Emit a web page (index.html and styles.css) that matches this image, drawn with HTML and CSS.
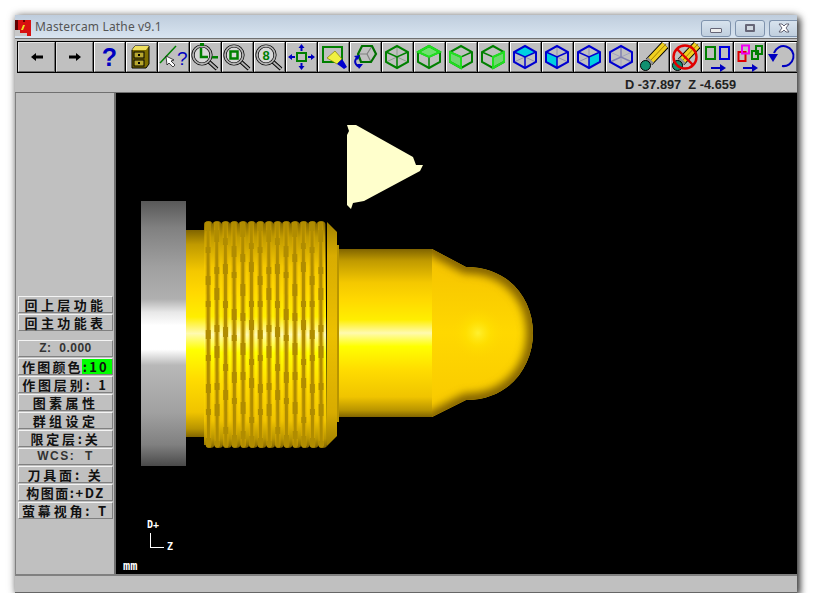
FILE: index.html
```html
<!DOCTYPE html>
<html lang="en">
<head>
    <meta charset="UTF-8">
    <title>Mastercam Lathe v9.1</title>
    <link rel="stylesheet" href="styles.css">
</head>
<body>

    <!-- shared icon parts -->
    <svg class="defs" width="0" height="0">
        <defs>
            <symbol id="lens" viewBox="0 0 29 30">
                <line x1="16" y1="18" x2="26" y2="27" stroke="#000" stroke-width="4"/>
                <line x1="16" y1="18" x2="26" y2="27" stroke="#b0b0b0" stroke-width="2"/>
                <circle cx="11" cy="13" r="9" fill="#d8d8d8" stroke="#000" stroke-width="3.2"/>
                <circle cx="11" cy="13" r="9" fill="none" stroke="#b0b0b0" stroke-width="1.8"/>
            </symbol>
            <symbol id="cube" viewBox="0 0 29 30">
                <polygon points="14,4 25,10 25,20 14,26 3,20 3,10" fill="none" stroke="currentColor" stroke-width="2"/>
                <polyline points="3,10 14,15 25,10" fill="none" stroke="currentColor" stroke-width="1.5"/>
                <line x1="14" y1="15" x2="14" y2="26" stroke="currentColor" stroke-width="1.5"/>
            </symbol>
            <symbol id="pencil" viewBox="0 0 29 30">
                <line x1="10" y1="20" x2="26" y2="3" stroke="#000" stroke-width="9"/>
                <line x1="10" y1="20" x2="26" y2="3" stroke="#f0d020" stroke-width="7"/>
                <line x1="11" y1="19" x2="27" y2="2" stroke="#a08000" stroke-width="1"/>
                <line x1="7" y1="23" x2="12" y2="18" stroke="#909090" stroke-width="8"/>
                <circle cx="6.500" cy="23.500" r="5" fill="#109070" stroke="#000"/>
            </symbol>
            <symbol id="next" viewBox="0 0 29 30">
                <path d="M8 25h9v-3l6 4-6 4v-3H8z" fill="#0000c0"/>
            </symbol>
        </defs>
    </svg>

    <div class="window">
        <div class="titlebar">
            <svg class="app-icon" viewBox="0 0 16 16">
                <rect width="16" height="16" fill="#d81010"/>
                <path d="M0 10h5v3h7v3H0z" fill="#c8c8c8"/>
                <path d="M0 0h3v10H0zM8 0h2v2H8z" fill="#600000"/>
                <path d="M6 10l2-5 2 0-2 5z" fill="#f0e020"/>
            </svg>
            <span class="title">Mastercam Lathe v9.1</span>
            <div class="win-controls">
                <div class="win-btn"><span class="win-min"></span></div>
                <div class="win-btn"><span class="win-max"></span></div>
                <div class="win-btn win-close">
                    <svg viewBox="0 0 12 10"><path d="M1 1h3l2 2 2-2h3L8 5l3 4H8L6 7 4 9H1l3-4z" fill="#fff" stroke="#556" stroke-width=".9"/></svg>
                </div>
            </div>
        </div>

        <div class="toolbar">
            <div class="tb-row">
                <div class="tb-btn wide">
                    <svg class="arrow" viewBox="0 0 12 10"><path d="M0 5l5-4v2.500h7v3H5V9z" fill="#000"/></svg>
                </div>
                <div class="tb-btn wide">
                    <svg class="arrow" viewBox="0 0 12 10"><path d="M12 5L7 1v2.500H0v3h7V9z" fill="#000"/></svg>
                </div>
                <div class="tb-btn"><span class="help">?</span></div>
                <div class="tb-btn">
                    <svg viewBox="0 0 29 30">
                        <path d="M5 8l3-4h14v18l-3 4H5z" fill="#807000" stroke="#000"/>
                        <path d="M5 8l3-4h14l-3 4z" fill="#f0e060"/>
                        <rect x="7" y="10" width="10" height="6" fill="#b8a830" stroke="#000"/>
                        <rect x="7" y="18" width="10" height="6" fill="#b8a830" stroke="#000"/>
                        <rect x="11" y="12" width="2" height="2" fill="#000"/>
                        <rect x="11" y="20" width="2" height="2" fill="#000"/>
                    </svg>
                </div>
                <div class="tb-btn">
                    <svg viewBox="0 0 29 30">
                        <line x1="1" y1="21" x2="17" y2="4" stroke="#008000" stroke-width="1.500"/>
                        <path d="M7 14l1 9 2-2 4 4 2-2-4-4 3-1z" fill="#fff" stroke="#000" stroke-width=".7"/>
                        <text class="icon-q" x="18" y="23">?</text>
                    </svg>
                </div>
                <div class="tb-btn">
                    <svg viewBox="0 0 29 30">
                        <use href="#lens"/>
                        <path d="M10 6v9h7" fill="none" stroke="#008000" stroke-width="2.500"/>
                        <rect x="9" y="1" width="4" height="3" fill="#008000"/>
                        <rect x="21" y="14" width="6" height="2.500" fill="#008000"/>
                    </svg>
                </div>
                <div class="tb-btn">
                    <svg viewBox="0 0 29 30">
                        <use href="#lens"/>
                        <rect x="7.500" y="9.500" width="7" height="7" fill="none" stroke="#008000" stroke-width="2.500"/>
                    </svg>
                </div>
                <div class="tb-btn">
                    <svg viewBox="0 0 29 30">
                        <use href="#lens"/>
                        <text class="icon-8" x="11" y="18">8</text>
                    </svg>
                </div>
                <div class="tb-btn">
                    <svg viewBox="0 0 29 30">
                        <rect x="10" y="11" width="9" height="8" fill="#c0c0c0" stroke="#008000" stroke-width="2"/>
                        <path d="M14.500 2l3 4h-2v3h-2V6h-2zM14.500 28l3-4h-2v-3h-2v3h-2zM1 15l4-3v2h3v2H5v2zM28 15l-4-3v2h-3v2h3v2z" fill="#0000c0"/>
                    </svg>
                </div>
                <div class="tb-btn">
                    <svg viewBox="0 0 29 30">
                        <rect x="4" y="5" width="19" height="15" fill="none" stroke="#008000" stroke-width="2"/>
                        <path d="M8 16l8-7 7 8-5 5z" fill="#f0f040" stroke="#808000" stroke-width=".7"/>
                        <path d="M18 22l5-5 2 3 3 5-3 2-4-3z" fill="#0000d0"/>
                    </svg>
                </div>
                <div class="tb-btn">
                    <svg viewBox="0 0 29 30">
                        <path d="M7 12l9 0 5-8M16 12l4 8" fill="none" stroke="#808080" stroke-width="1.200"/>
                        <polygon points="11,4 21,4 25,12 20,20 10,20 7,12" fill="none" stroke="#007000" stroke-width="2.200"/>
                        <path d="M7 15c-4 3-4 7 1 10" fill="none" stroke="#0000c0" stroke-width="2"/>
                        <path d="M3 14l6-1-2 5zM12 22l-4 5-2-5z" fill="#0000c0"/>
                    </svg>
                </div>
                <div class="tb-btn">
                    <svg viewBox="0 0 29 30" class="green">
                        <path d="M3 20l11-5 11 5M14 4v11" fill="none" stroke="#8aa08a"/>
                        <use href="#cube"/>
                    </svg>
                </div>
                <div class="tb-btn">
                    <svg viewBox="0 0 29 30" class="green">
                        <path d="M3 10l11 5 11-5-11-6z" fill="#70e070"/>
                        <use href="#cube"/>
                        <path d="M3 10l11-6 11 6-11 5z" fill="none" stroke="#20e020" stroke-width="2"/>
                    </svg>
                </div>
                <div class="tb-btn">
                    <svg viewBox="0 0 29 30" class="green">
                        <path d="M3 10v10l11 6V15z" fill="#70d870"/>
                        <use href="#cube"/>
                        <path d="M3 10v10l11 6V15z" fill="none" stroke="#20e020" stroke-width="2"/>
                    </svg>
                </div>
                <div class="tb-btn">
                    <svg viewBox="0 0 29 30" class="green">
                        <path d="M25 10v10l-11 6V15z" fill="#70d870"/>
                        <use href="#cube"/>
                        <path d="M25 10v10l-11 6V15z" fill="none" stroke="#20e020" stroke-width="2"/>
                    </svg>
                </div>
                <div class="tb-btn">
                    <svg viewBox="0 0 29 30" class="blue">
                        <path d="M3 10l11 5 11-5-11-6z" fill="#00d0e0"/>
                        <path d="M3 20l11-5 11 5" fill="none" stroke="#9090b0"/>
                        <use href="#cube"/>
                    </svg>
                </div>
                <div class="tb-btn">
                    <svg viewBox="0 0 29 30" class="blue">
                        <path d="M3 10v10l11 6V15z" fill="#00d0e0"/>
                        <path d="M14 4v11l11 5" fill="none" stroke="#9090b0"/>
                        <use href="#cube"/>
                    </svg>
                </div>
                <div class="tb-btn">
                    <svg viewBox="0 0 29 30" class="blue">
                        <path d="M25 10v10l-11 6V15z" fill="#00d0e0"/>
                        <path d="M14 4v11L3 20" fill="none" stroke="#9090b0"/>
                        <use href="#cube"/>
                    </svg>
                </div>
                <div class="tb-btn">
                    <svg viewBox="0 0 29 30" class="blue">
                        <path d="M3 10l11 5 11-5M14 15v11" fill="none" stroke="#a0a0c0"/>
                        <path d="M3 20l11-5 11 5M14 4v11" fill="none" stroke="#8080b0" stroke-width="1.500"/>
                        <polygon points="14,4 25,10 25,20 14,26 3,20 3,10" fill="none" stroke="currentColor" stroke-width="2"/>
                    </svg>
                </div>
                <div class="tb-btn">
                    <svg viewBox="0 0 29 30"><use href="#pencil"/></svg>
                </div>
                <div class="tb-btn">
                    <svg viewBox="0 0 29 30">
                        <use href="#pencil"/>
                        <circle cx="14" cy="15" r="11.500" fill="none" stroke="#e00000" stroke-width="2.400"/>
                        <line x1="6" y1="7" x2="22" y2="23" stroke="#e00000" stroke-width="2.400"/>
                    </svg>
                </div>
                <div class="tb-btn">
                    <svg viewBox="0 0 29 30">
                        <rect x="3" y="5" width="9" height="12" fill="none" stroke="#008000" stroke-width="2"/>
                        <rect x="17" y="5" width="9" height="12" fill="none" stroke="#0000e0" stroke-width="2"/>
                        <use href="#next"/>
                    </svg>
                </div>
                <div class="tb-btn">
                    <svg viewBox="0 0 29 30">
                        <rect x="3.500" y="10" width="7" height="9" fill="none" stroke="#e00000" stroke-width="2"/>
                        <rect x="7" y="3.500" width="7" height="8" fill="none" stroke="#f000f0" stroke-width="2"/>
                        <rect x="17" y="9" width="6" height="8" fill="none" stroke="#008000" stroke-width="2"/>
                        <rect x="21" y="4" width="6" height="8" fill="none" stroke="#008000" stroke-width="2"/>
                        <use href="#next"/>
                    </svg>
                </div>
                <div class="tb-btn">
                    <svg viewBox="0 0 29 30">
                        <path d="M7 11A10 10 0 1 1 15 24" fill="none" stroke="#0000c0" stroke-width="2"/>
                        <path d="M1 12h10l-5 8z" fill="#0000c0"/>
                    </svg>
                </div>
            </div>
            <div class="readout">D -37.897&nbsp; Z -4.659</div>
        </div>

        <div class="main">
            <div class="sidebar">
                <div class="menu-group">
                    <div class="menu-btn spaced">回上层功能</div>
                    <div class="menu-btn spaced">回主功能表</div>
                </div>
                <div class="menu-group">
                    <div class="menu-btn latin">Z:&nbsp; 0.000</div>
                    <div class="menu-btn color-row">作图颜色:10</div>
                    <div class="menu-btn">作图层别: 1</div>
                    <div class="menu-btn spaced">图素属性</div>
                    <div class="menu-btn spaced">群组设定</div>
                    <div class="menu-btn">限定层:关</div>
                    <div class="menu-btn latin wcs">WCS:&nbsp; T</div>
                    <div class="menu-btn">刀具面: 关</div>
                    <div class="menu-btn tight">构图面:+DZ</div>
                    <div class="menu-btn">萤幕视角: T</div>
                </div>
            </div>

            <div class="viewport">
                <svg class="scene" viewBox="116 93 681 481">
                    <defs>
                        <linearGradient id="steel" x1="0" y1="0" x2="0" y2="1">
                            <stop offset="0" stop-color="#585858"/>
                            <stop offset=".1" stop-color="#808080"/>
                            <stop offset=".25" stop-color="#a0a0a0"/>
                            <stop offset=".37" stop-color="#b0b0b0"/>
                            <stop offset=".42" stop-color="#e8e8e8"/>
                            <stop offset=".47" stop-color="#fff"/>
                            <stop offset=".56" stop-color="#fff"/>
                            <stop offset=".62" stop-color="#b8b8b8"/>
                            <stop offset=".8" stop-color="#a0a0a0"/>
                            <stop offset=".92" stop-color="#808080"/>
                            <stop offset="1" stop-color="#4a4a4a"/>
                        </linearGradient>
                        <linearGradient id="gold" x1="0" y1="0" x2="0" y2="1">
                            <stop offset="0" stop-color="#806400"/>
                            <stop offset=".07" stop-color="#c09a00"/>
                            <stop offset=".2" stop-color="#f4c800"/>
                            <stop offset=".3" stop-color="#ffd800"/>
                            <stop offset=".42" stop-color="#ffee00"/>
                            <stop offset=".5" stop-color="#fffab0"/>
                            <stop offset=".58" stop-color="#ffff00"/>
                            <stop offset=".72" stop-color="#ffdc00"/>
                            <stop offset=".88" stop-color="#f0c400"/>
                            <stop offset=".96" stop-color="#b89400"/>
                            <stop offset="1" stop-color="#806400"/>
                        </linearGradient>
                        <linearGradient id="nose" x1="0" y1="0" x2="0" y2="1">
                            <stop offset="0" stop-color="#f4c000"/>
                            <stop offset=".5" stop-color="#ffd800"/>
                            <stop offset="1" stop-color="#f8c800"/>
                        </linearGradient>
                        <linearGradient id="chamfer" x1="0" y1="0" x2="0" y2="1">
                            <stop offset="0" stop-color="#a08000"/>
                            <stop offset=".15" stop-color="#d8ac00"/>
                            <stop offset=".5" stop-color="#ecc000"/>
                            <stop offset=".85" stop-color="#d8ac00"/>
                            <stop offset="1" stop-color="#a08000"/>
                        </linearGradient>
                        <radialGradient id="hotspot" gradientUnits="userSpaceOnUse" cx="478" cy="333" r="26">
                            <stop offset="0" stop-color="#fff030"/>
                            <stop offset=".5" stop-color="#ffe400" stop-opacity=".5"/>
                            <stop offset="1" stop-color="#ffd800" stop-opacity="0"/>
                        </radialGradient>
                        <filter id="soft" x="-20%" y="-20%" width="140%" height="140%">
                            <feGaussianBlur stdDeviation="4"/>
                        </filter>
                        <path id="thread-shape" d="M204 445V224a4.340 3 0 0 1 8.670 0a4.340 3 0 0 1 8.670 0a4.340 3 0 0 1 8.670 0a4.340 3 0 0 1 8.670 0a4.340 3 0 0 1 8.670 0a4.340 3 0 0 1 8.670 0a4.340 3 0 0 1 8.670 0a4.340 3 0 0 1 8.670 0a4.340 3 0 0 1 8.670 0a4.340 3 0 0 1 8.670 0a4.340 3 0 0 1 8.670 0a4.340 3 0 0 1 8.670 0a4.340 3 0 0 1 8.670 0a4.340 3 0 0 1 8.670 0L327 445a4.340 3 0 0 1 -8.670 0a4.340 3 0 0 1 -8.670 0a4.340 3 0 0 1 -8.670 0a4.340 3 0 0 1 -8.670 0a4.340 3 0 0 1 -8.670 0a4.340 3 0 0 1 -8.670 0a4.340 3 0 0 1 -8.670 0a4.340 3 0 0 1 -8.670 0a4.340 3 0 0 1 -8.670 0a4.340 3 0 0 1 -8.670 0a4.340 3 0 0 1 -8.670 0a4.340 3 0 0 1 -8.670 0a4.340 3 0 0 1 -8.670 0a4.340 3 0 0 1 -8.670 0z"/>
                        <pattern id="threads" patternUnits="userSpaceOnUse" x="204" y="222" width="52" height="224">
                            <g class="thread-shade">
                                <line x1="4" y1="0" x2="4.500" y2="224"/>
                                <line x1="12.700" y1="0" x2="13.200" y2="224"/>
                                <line x1="21.300" y1="0" x2="21.800" y2="224"/>
                                <line x1="30" y1="0" x2="30.500" y2="224"/>
                                <line x1="38.700" y1="0" x2="39.200" y2="224"/>
                                <line x1="47.300" y1="0" x2="47.800" y2="224"/>
                            </g>
                            <g class="thread-line">
                                <line x1="4" y1="0" x2="4.500" y2="224"/>
                                <line x1="12.700" y1="0" x2="13.200" y2="224"/>
                                <line x1="21.300" y1="0" x2="21.800" y2="224"/>
                                <line x1="30" y1="0" x2="30.500" y2="224"/>
                                <line x1="38.700" y1="0" x2="39.200" y2="224"/>
                                <line x1="47.300" y1="0" x2="47.800" y2="224"/>
                            </g>
                            <g class="thread-bulge">
                                <line x1="4" y1="0" x2="4.500" y2="224" stroke-dasharray="9 16 6 23"/>
                                <line x1="12.700" y1="0" x2="13.200" y2="224" stroke-dasharray="12 25 7 14" stroke-dashoffset="-8"/>
                                <line x1="21.300" y1="0" x2="21.800" y2="224" stroke-dasharray="7 19 10 27" stroke-dashoffset="-16"/>
                                <line x1="30" y1="0" x2="30.500" y2="224" stroke-dasharray="11 15 6 31" stroke-dashoffset="-24"/>
                                <line x1="38.700" y1="0" x2="39.200" y2="224" stroke-dasharray="8 22 12 17" stroke-dashoffset="-32"/>
                                <line x1="47.300" y1="0" x2="47.800" y2="224" stroke-dasharray="10 29 6 13" stroke-dashoffset="-40"/>
                            </g>
                        </pattern>
                        <clipPath id="nose-clip">
                            <path d="M432 249L466 267C510 267 533 300 533 333S510 400 466 400L432 417z"/>
                        </clipPath>
                    </defs>

                    <rect x="141" y="201" width="45" height="265" fill="url(#steel)"/>
                    <rect x="186" y="230" width="18" height="207" fill="url(#gold)"/>

                    <!-- threaded section -->
                    <use href="#thread-shape" fill="url(#gold)"/>
                    <use href="#thread-shape" fill="url(#threads)"/>
                    <path d="M327 222l10 10v204l-10 10z" fill="url(#chamfer)"/>
                    <path d="M337 245h2v177h-2z" fill="#b89400"/>

                    <!-- shaft and nose -->
                    <rect x="339" y="249" width="93" height="168" fill="url(#gold)"/>
                    <g clip-path="url(#nose-clip)">
                        <rect x="432" y="249" width="102" height="168" fill="url(#nose)"/>
                        <circle cx="478" cy="333" r="26" fill="url(#hotspot)"/>
                        <path d="M412 238L466 267C510 267 533 300 533 333S510 400 466 400L412 428" fill="none" stroke="#806000" stroke-width="13" filter="url(#soft)"/>
                    </g>

                    <polygon points="347,125 356,125 413,157 416,165 423,165 420,171 364,201 353,203 351,209 348,206 347,205 347,135 349,131" fill="#ffffcc"/>

                    <text class="scene-label" x="147" y="528">D+</text>
                    <path d="M150.500 533v14.500H164" fill="none" stroke="#fff" shape-rendering="crispEdges"/>
                    <text class="scene-label" x="167" y="550">Z</text>
                    <text class="scene-label units" x="123" y="570">mm</text>
                </svg>
            </div>
        </div>

        <div class="statusbar"></div>
    </div>

</body>
</html>
```

FILE: styles.css
```css
body {
    margin: 0;
    background-color: #fff;
    font-family: "Liberation Sans", Arial, sans-serif;
}

.defs {
    display: block;
    height: 0;
}

.window {
    display: flex;
    flex-direction: column;
    width: 782px;
    height: 578px;
    margin: 15px 0 0 15px;
    background-color: #c0c0c0;
    box-shadow: 3px 3px 7px rgba(0, 0, 0, 0.75), 0 0 8px rgba(0, 0, 0, 0.35);
    overflow: hidden;
}

/* Title bar */
.titlebar {
    display: flex;
    align-items: center;
    height: 23px;
    background: linear-gradient(#bfcddd, #d8e4f0);
}

.app-icon {
    width: 16px;
    height: 16px;
    margin: 2px 4px 0 0;
}

.title {
    font-family: "Noto Sans", sans-serif;
    font-size: 12px;
    color: #555;
    letter-spacing: 0.15px;
}

.win-controls {
    display: flex;
    gap: 4px;
    margin: 3px 0 0 auto;
}

.win-btn {
    display: flex;
    align-items: center;
    justify-content: center;
    width: 28px;
    height: 15px;
    border: 1px solid #7f93ad;
    border-radius: 3px;
    background: linear-gradient(#d8e3ee, #c0cfde);
}

.win-close {
    width: 27px;
    border-right: none;
    border-radius: 3px 0 0 3px;
}

.win-close svg {
    width: 12px;
    height: 10px;
}

.win-min {
    width: 10px;
    height: 3px;
    border: 1px solid #667;
    background-color: #eee;
    border-radius: 1px;
    margin-top: 4px;
}

.win-max {
    width: 6px;
    height: 4px;
    border: 2px solid #667;
    background-color: #d0d8e0;
    border-radius: 1px;
}

/* Toolbar */
.toolbar {
    box-sizing: border-box;
    height: 55px;
    border-top: 1px solid #707070;
    border-bottom: 1px solid #707070;
    padding-top: 2px;
    overflow: hidden;
}

.tb-row {
    display: flex;
    gap: 1px;
    width: 790px;
    height: 30px;
    margin-left: 2px;
    padding: 1px;
    background-color: #000;
}

.tb-btn {
    display: flex;
    align-items: center;
    justify-content: center;
    flex: none;
    box-sizing: border-box;
    width: 31px;
    height: 30px;
    border: 1px solid;
    border-color: #fff #707070 #707070 #fff;
    background-color: #c0c0c0;
}

.tb-btn.wide {
    width: 37px;
    border-color: #e0e0e0 #707070 #707070 #e0e0e0;
}

.tb-btn svg {
    flex: none;
    width: 29px;
    height: 30px;
}

.tb-btn svg.arrow {
    width: 12px;
    height: 10px;
}

.green {
    color: #008000;
}

.blue {
    color: #0000d0;
}

.help {
    font-size: 25px;
    font-weight: bold;
    line-height: 28px;
    color: #0000c0;
}

.icon-q {
    font-family: "Liberation Sans", sans-serif;
    font-size: 19px;
    fill: #0000c0;
}

.icon-8 {
    font-family: "Liberation Sans", sans-serif;
    font-size: 13px;
    font-weight: bold;
    fill: #008000;
    text-anchor: middle;
}

.readout {
    margin: 5px 61px 0 0;
    text-align: right;
    font-size: 12.8px;
    font-weight: bold;
    line-height: 14px;
    color: #222;
}

/* Side menu and viewport */
.main {
    display: flex;
    flex: 1;
    min-height: 0;
}

.sidebar {
    display: flex;
    flex-direction: column;
    gap: 9px;
    box-sizing: border-box;
    width: 101px;
    padding: 203px 0 0 2px;
    border-left: 1px solid #808080;
    border-right: 2px solid #707070;
}

.menu-group {
    display: flex;
    flex-direction: column;
    gap: 1px;
}

.menu-btn {
    box-sizing: border-box;
    width: 95px;
    height: 17px;
    border: 1px solid;
    border-color: #f4f4f4 #808080 #808080 #f4f4f4;
    text-align: center;
    font-family: "Noto Sans CJK SC", "Liberation Sans", sans-serif;
    font-size: 13px;
    font-weight: bold;
    line-height: 15px;
    letter-spacing: 2.8px;
    white-space: nowrap;
    color: #111;
}

.menu-btn.spaced {
    letter-spacing: 3.4px;
}

.menu-btn.tight {
    letter-spacing: 1.5px;
}

.menu-btn.latin {
    font-family: "Liberation Sans", sans-serif;
    font-size: 12px;
    color: #333;
    letter-spacing: 0.5px;
}

.menu-btn.wcs {
    letter-spacing: 1.5px;
}

.color-row {
    background: linear-gradient(to right, transparent 63px, #00ff00 63px);
    letter-spacing: 2.2px;
}

.viewport {
    flex: 1;
    background-color: #000;
}

.scene {
    display: block;
    width: 681px;
    height: 481px;
}

.thread-shade line {
    stroke: #d8a800;
    stroke-width: 5.5;
    stroke-opacity: 0.55;
}

.thread-line line {
    stroke: #b08c00;
    stroke-width: 3;
}

.thread-bulge line {
    stroke: #b08c00;
    stroke-width: 5;
}

.scene-label {
    font-family: "DejaVu Sans Mono", monospace;
    font-size: 10px;
    font-weight: bold;
    fill: #fff;
}

.units {
    font-size: 12px;
}

.statusbar {
    box-sizing: border-box;
    height: 19px;
    border-top: 2px solid #808080;
    border-bottom: 1px solid #666;
}
```
